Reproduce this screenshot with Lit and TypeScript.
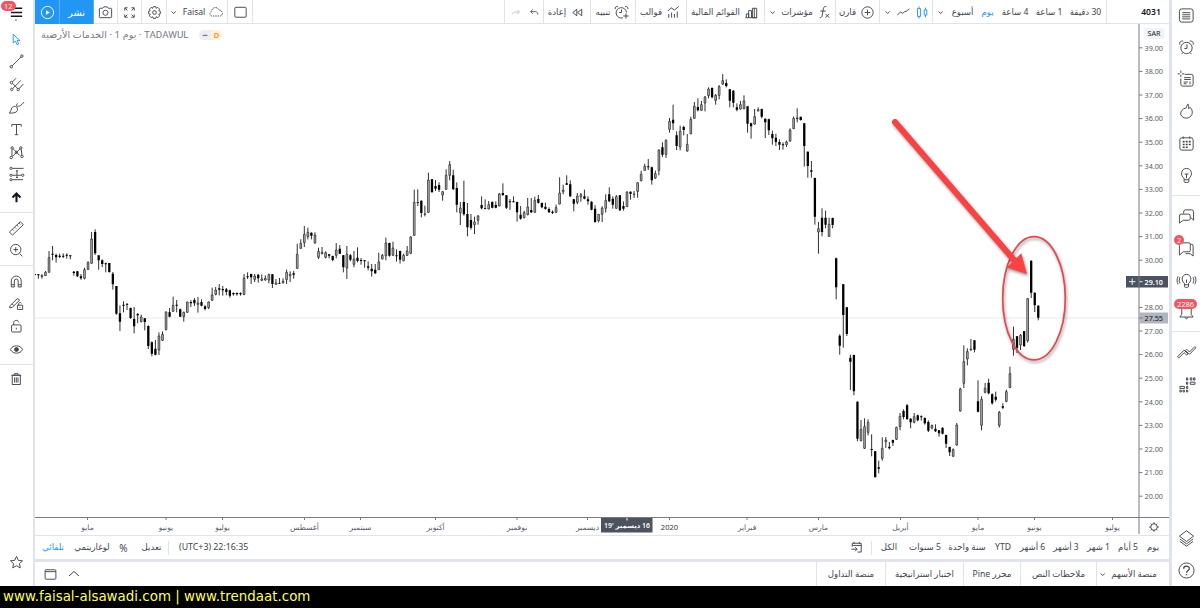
import { html, css, svg, LitElement, TemplateResult } from 'lit';
import { customElement, property } from 'lit/decorators.js';
import { classMap } from 'lit/directives/class-map.js';
import { styleMap } from 'lit/directives/style-map.js';

type Cell_t = {
  width: number,
  text?: string,
  icon?: string,
  kind?: string,
  size?: number
}

const icons: Record<string, TemplateResult> = {
  menu: svg`<path d="M3 4.5h12M3 9h12M3 13h12" stroke-width="1.5"/>`,
  cursor: svg`<path d="M5.5 3.5v9.2l2.4-2 1.7 3.8 1.7-.8-1.7-3.6h3z"/>`,
  line: svg`<path d="M4.2 13.8l9.6-9.6"/><circle cx="3.4" cy="14.6" r="1.3"/><circle cx="14.7" cy="3.3" r="1.3"/>`,
  fork: svg`<path d="M4.7 6.2l3.8-3.8M4.500 7.500l6 6M5 13.300l8.500-8.500M11.700 13.500l4.500-5"/><circle cx="3.600" cy="7" r="1.300"/><circle cx="4" cy="14.200" r="1.300"/><circle cx="10.800" cy="14.300" r="1.300"/>`,
  brush: svg`<path d="M1.500 15c1.300-1.500 1.500-3.500 2.500-5.500 1.500-2.300 4.500-2.200 5.600-.3 1.200 2.200 0 4.600-2.200 5.200-1.900.5-3.900.5-5.900.6zM10 8.500c-1.200-1.500-1-3 0-3.800M10.800 7.800c1.500 0 4-1.800 6.200-4.600"/>`,
  text: svg`<path d="M4 6V3.700h10V6M9 3.700v10.800M7.200 14.500h3.600"/>`,
  pattern: svg`<path d="M4.200 13V5.500M5.500 5.200l7 7M4.600 13.300l8.500-8.500M14 5.500l.8 6.800"/><circle cx="4.400" cy="4.200" r="1.300"/><circle cx="13.600" cy="4.200" r="1.300"/><circle cx="8.800" cy="8.800" r="1.200"/><circle cx="3.400" cy="14.300" r="1.300"/><circle cx="14.800" cy="13.200" r="1.300"/>`,
  projection: svg`<path d="M4.500 2.500h12M4.500 9.800h10M4.500 14.500h11.500M9.500 4.500v8M8.500 5.200h2M8.500 12.200h2"/><circle cx="3.200" cy="2.500" r="1.200"/><circle cx="3.200" cy="9.800" r="1.200"/><circle cx="15.600" cy="9.800" r="1.200"/><circle cx="3.200" cy="14.500" r="1.200"/>`,
  up: svg`<path d="M9 14V5M4.800 9L9 4.800 13.200 9" stroke-width="2.200"/>`,
  ruler: svg`<path d="M1.500 12.800L13 1.800l3.200 3.200L4.700 16zM5 10l1.300 1.300M7.300 7.800l1.300 1.300M9.600 5.500l1.300 1.300M11.800 3.400l1.300 1.300"/>`,
  zoom: svg`<circle cx="8.200" cy="8" r="5.500"/><path d="M12.200 12.200l3 3M5.700 8h5M8.200 5.500v5"/>`,
  magnet: svg`<path d="M3.500 14.800V8.500a5 5 0 0 1 10.500 0v6.300h-3.200V8.500a2 2 0 0 0-4.100 0v6.300zM3.500 12.400h3.200M10.800 12.400H14"/>`,
  drawLock: svg`<path d="M2 11.500l7.500-7.300a1.500 1.500 0 0 1 2 2.200L4.500 13l-2.700.6zM4.500 9.500l1.500 1.700M10 10.800h5.500v4.500H10zM11.300 10.800V9.300c0-1.800 2.600-1.800 2.800-.4"/><path d="M12.700 12.600v1"/>`,
  lock: svg`<rect x="3.800" y="7.300" width="10" height="7.500" rx="1"/><path d="M6 7.300V5c0-3.200 5-3.400 5.500-.3M8.800 10.300v1.800"/>`,
  eye: svg`<path d="M2.500 9c2.700-5.200 10.300-5.200 13 0-2.700 5.200-10.300 5.200-13 0z"/><circle cx="9" cy="9" r="2" fill="currentColor"/>`,
  trash: svg`<path d="M4.500 4.500h8.600v9.800H4.500zM3.500 4.500h10.500M7 4.300V2.800h3.600v1.500M7 6.800v5.500M8.800 6.800v5.500M10.600 6.800v5.500"/>`,
  star: svg`<path d="M9 2.500l1.900 4.200 4.500.5-3.300 3 .9 4.500L9 12.400l-4 2.300.9-4.500-3.300-3 4.500-.5z"/>`,
  play: svg`<circle cx="9" cy="9" r="6.500"/><path d="M7.500 6.500v5L11.500 9z" fill="currentColor" stroke="none"/>`,
  camera: svg`<path d="M2.500 5.500q0-1 1-1H6l1.200-1.500h3.600L12 4.500h2.500q1 0 1 1v8q0 1-1 1h-11q-1 0-1-1z"/><circle cx="9" cy="9.300" r="2.700"/>`,
  expand: svg`<path d="M4 7V4h3M4.300 4.300l2.500 2.500M11 4h3v3M13.700 4.300l-2.500 2.500M4 11v3h3M4.300 13.700l2.500-2.500M11 14h3v-3M13.700 13.700l-2.500-2.500"/>`,
  gear: svg`<path d="M7.700 2.800h2.600l.5 1.700 1.700-.9 1.900 1.900-.9 1.700 1.700.5v2.600l-1.700.5.9 1.700-1.900 1.900-1.700-.9-.5 1.700H7.700l-.5-1.700-1.700.9-1.900-1.900.9-1.700-1.700-.5V7.700l1.700-.5-.9-1.700 1.900-1.900 1.700.9z"/><circle cx="9" cy="9" r="2"/>`,
  cloud: svg`<path d="M4.500 13.500a2.800 2.800 0 0 1-.3-5.500c.3-5 7-5.300 8-1.200 3 0 4.300 2 3.900 4.200-.3 1.600-1.500 2.500-3 2.500z" stroke-dasharray="1.700 1"/>`,
  frame: svg`<rect x="3" y="3.500" width="12" height="10.500" rx="1"/>`,
  chevron: svg`<path d="M7 8l2.200 2L11.400 8"/>`,
  redo: svg`<path d="M13.500 8.500H8c-2 0-3 1.300-3 3M11 5.800l2.700 2.700-2.700 2.600"/>`,
  undo: svg`<path d="M4.500 8H10c2 0 3 1.300 3 3.500M7 5.200L4.300 8 7 10.600"/>`,
  rewind: svg`<path d="M8.300 5.500v7L4 9zM13.500 5.500v7L9.200 9z"/>`,
  alertAdd: svg`<path d="M10.500 14.600a5.500 5.500 0 1 1 3.800-5.600M9 5.800V9H6.500M2.300 5.500c-.5-2 1.200-3.300 3-2.700M12.800 2.800c2-.6 3.500.8 3 2.700M13.700 10v5.500M11 12.700h5.500"/>`,
  templates: svg`<path d="M3 7.500L6.500 4 10 6.500l4.500-4M4 14.500v-4M7 14.500V9M10 14.500v-4M13 14.500V8"/>`,
  bars: svg`<path d="M3.500 14.500v-4H6v4M6 14.500V7h3v7.500M10 14.500V4.500h4.500v10zM2.500 14.500h12.500M12 4.500v10"/>`,
  fx: svg`<path d="M4 14.300c1.500.3 2.200-.5 2.500-2l1.300-7.300c.4-1.900 1.400-2.700 3.200-2.200M4.500 7.500h5.800M10 10.500l4 4M14 10.500l-4 4"/>`,
  plus: svg`<circle cx="9" cy="9" r="6"/><path d="M6 9h6M9 6v6"/>`,
  wave: svg`<path d="M2.500 11.500l3.500-3 2.200 1.500 2-2h1.500l3.500-3M2.500 13.200h.1"/>`,
  candles: svg`<path d="M3.800 4.800h3v8.400h-3zM5.300 2.500v2.300M5.300 13.200v2.300M10.800 6.300h2.800v5.400h-2.800zM12.200 3.800v2.500M12.200 11.700v2.500"/>`,
  calendarGo: svg`<path d="M4.500 8V4.500h9.500v9.300H10M4.500 6.800H14M6.500 3v2M12 3v2M3.500 10.800h6M7.500 8.700l2.200 2.100-2.200 2.200"/>`,
  panel: svg`<rect x="3.300" y="4" width="11.400" height="10" rx="1"/><path d="M3.300 6h11.400"/>`,
  collapse: svg`<path d="M4 11l5-4.500 5 4.500"/>`,
  list: svg`<rect x="1.500" y="2" width="14.500" height="14" rx="2.500"/><path d="M4.500 6h8.500M4.500 8.200h8.500M4.500 10.400h8.500M4.500 12.600h8.500"/>`,
  alarm: svg`<circle cx="9" cy="9.500" r="6"/><path d="M9.500 5.800V10H6.700M2 6c-.9-2.700 1.300-4.600 3.600-3.600M12.400 2.400c2.300-1 4.500.9 3.600 3.600M5 14.500l-1 1.300M13 14.500l1 1.300"/>`,
  news: svg`<path d="M7 3.500h7q2 0 2 2V14q0 2-2 2H5q-2 0-2-2V8M6.500 7h7M6.500 9h7M6 11.700h4.500M12 11.700h1.500M6 13.500h3M12 13.500h1.500M3-.5v2.500M3 4v2.500M-.5 3H2M4 3h2.500"/>`,
  flame: svg`<path d="M5.800 6.300L9 5c.5-1.500.3-2.500 1.500-4 .6 1.500 1 3.200.7 5l1.800-1.300c4.500 4.800 1.300 11.300-4 11.300C3.200 16 .2 10.300 5.800 6.300z"/>`,
  calendar: svg`<rect x="2" y="3" width="14" height="13" rx="2"/><path d="M5.500 1.500V4M12.500 1.500V4"/><path d="M5 7h2M8.200 7h2M11.400 7h2M5 10h2M8.200 10h2M11.400 10h2M5 13h2M8.200 13h2" stroke-width="1.700"/>`,
  bulb: svg`<path d="M6.500 12C2.200 9.500 3 1.500 9 1.500S15.800 9.500 11.500 12v3.300q0 1-1 1h-3q-1 0-1-1zM6.500 13.500h5M9 12V7.500M7 7.500h4"/>`,
  chats: svg`<path d="M6 6V4q0-2 2-2h6.500q2 0 2 2v9L13.500 10M3.500 6.500h7.500q2 0 2 2V11q0 2-2 2H5.500L1.500 16V8.500q0-2 2-2z"/>`,
  chat: svg`<path d="M13 4.500h1.500q1.500 0 1.500 2V17l-3-2.500H8M3 3h8.500q1.500 0 1.500 1.500V11q0 1.500-1.500 1.500H5.500L1.500 16V5.500"/>`,
  stream: svg`<path d="M6.800 12C3 9.500 3.800 2.500 9 2.500s6 7 2.200 9.500v3.200q0 1-1 1H7.800q-1 0-1-1zM6.800 13.500h4.400M9 11.500V8M2.200 5.500c-1.200 2-1.200 4.500 0 6.500M.2 4.500c-1.600 2.700-1.600 5.800 0 8.500M15.800 5.500c1.200 2 1.200 4.500 0 6.500M17.800 4.500c1.600 2.700 1.600 5.800 0 8.500"/>`,
  bell: svg`<path d="M4 3v8l-2 2.800h14L14 11V3M7.500 14c.3 2.200 2.700 2.200 3 0"/>`,
  zigzag: svg`<path d="M-.5 13.500L6.500 6.500l4 4-1.300 1.300-2.700-2.700L.8 14.800zM7.800 6.800l1.300-1.300 3 3L17.800 2.800 19 4l-6.900 6.900z"/>`,
  dom: svg`<path d="M13 2h1.700v2.300H13zM16.500 2h1.500v2.300h-1.500zM9 2h1.300v2.300H9zM9 6.500h1.300v2.300H9zM13 6.500h5v2.300h-5zM2 11h4.800v2.200H2zM9 11h1.300v2.200H9zM2 15h1.500v1.900H2zM5.300 15h1.500v1.900H5.300zM9 15h1.300v1.900H9z"/>`,
  layers: svg`<path d="M9 .8l7.500 5.700L9 12.200 1.500 6.500zM2 9.500l7 5.200 7-5.200M2 12l7 5.200L16 12"/>`,
  help: svg`<circle cx="9" cy="9" r="8"/><path d="M6 7.200c0-3.700 6-3.700 6-.2 0 2-2.800 2-3 4.400M9 12.700v1.300" stroke-width="1.400"/>`,
};

const topCells: Cell_t[] = [
  { width: 25, icon: 'play', kind: 'blue' },
  { width: 34, text: 'نشر', kind: 'blue big' },
  { width: 24, icon: 'camera' },
  { width: 24, icon: 'expand' },
  { width: 25, icon: 'gear' },
];

const intervals: Cell_t[] = [
  { width: 15, icon: 'chevron' },
  { width: 29, text: 'أسبوع' },
  { width: 21, text: 'يوم', kind: 'active' },
  { width: 34, text: '4 ساعة' },
  { width: 34, text: '1 ساعة' },
  { width: 39, text: '30 دقيقة' },
];

const ranges: Cell_t[] = [
  { width: 31, icon: 'calendarGo', kind: 'ruled' },
  { width: 34, text: 'الكل' },
  { width: 38, text: '5 سنوات' },
  { width: 46, text: 'سنة واحدة' },
  { width: 26, text: 'YTD' },
  { width: 33, text: '6 أشهر' },
  { width: 34, text: '3 أشهر' },
  { width: 31, text: '1 شهر' },
  { width: 28, text: '5 أيام' },
  { width: 22, text: 'يوم' },
];

const months: [number, string][] = [
  [87.5, 'مايو'], [166, 'يونيو'], [222.5, 'يوليو'], [304.5, 'أغسطس'],
  [360.5, 'سبتمبر'], [435.5, 'أكتوبر'], [517, 'نوفمبر'], [587.5, 'ديسمبر'],
  [669.5, '2020'], [747, 'فبراير'], [818.5, 'مارس'], [900.5, 'أبريل'],
  [978, 'مايو'], [1034.5, 'يونيو'], [1112.5, 'يوليو'],
];

// Daily bars: high,open,close,low. Three units per pixel, down from the top of each run.
const runs = [
  {
    top: 140,
    bars: `402,402,405,405 402,403,406,416 403,410,406,416 393,407,397,407 333,397,353,397 318,341,344,361
      341,345,352,368 341,347,351,354 340,347,350,354 340,344,347,356 346,346,348,358 393,395,399,407
      393,394,409,411 402,409,415,419 383,415,389,418 364,388,367,390 276,370,297,370 268,276,340,345
      346,346,361,389 358,361,372,381 368,370,372,397 369,369,396,398 396,401,433,449 438,438,521,524
      496,520,545,573 484,494,497,517 490,491,494,510 503,504,534,537 501,537,559,580 519,522,526,550
      524,545,531,547 534,535,546,571 556,558,618,627 604,607,641,649 600,626,644,646 577,630,588,645
      574,601,583,603 514,569,516,571 504,517,530,532 470,514,496,515 480,494,497,517 506,508,530,531
      515,530,517,545 485,517,486,518 480,486,490,501 474,480,490,498 471,493,489,518 478,486,497,499
      496,499,507,511 484,503,486,507 443,481,465,482 441,463,450,466 432,445,449,466 438,447,451,467
      444,448,456,466 449,451,467,473 457,459,463,467 457,459,463,467 457,459,463,467 402,464,414,465
      397,409,412,417 401,402,412,432 402,418,408,426 402,404,415,428 403,421,417,423 406,420,415,422
      401,420,404,430 402,403,432,444 417,433,429,433 414,429,431,432 415,429,424,430 389,419,397,432
      394,407,403,426 393,400,404,416 311,385,343,386 298,325,310,326 258,308,283,321 263,290,277,298
      277,278,287,298 277,309,285,311 323,352,334,357 321,341,337,343 334,352,338,355 342,343,347,355
      347,348,360,364 309,346,330,355 315,326,341,342 345,346,382,397 318,384,343,417 342,346,359,364
      333,373,357,382 322,353,363,367 354,360,363,374 360,361,363,383 364,379,383,391 372,386,394,410
      372,389,400,402 338,389,366,390 342,357,346,358`,
  },
  {
    top: 60,
    bars: `533,587,549,601 548,549,587,590 545,586,564,587 568,586,588,605 572,573,599,611 581,602,586,604
      558,586,573,588 529,580,531,582 389,526,427,527 388,426,428,438 421,422,459,472 437,461,463,469
      338,457,360,459 357,358,396,399 360,378,386,393 367,375,389,396 394,405,395,422 328,388,346,389
      303,346,314,361 329,346,388,390 367,384,434,457 426,458,444,495 362,426,463,467 429,462,502,529
      462,480,503,509 470,494,486,522 465,481,468,494 409,435,445,448 418,444,446,448 423,447,434,448
      424,426,443,445 424,435,443,445 399,438,402,439 370,399,405,408 405,406,443,447 417,424,427,450
      409,424,426,427 425,426,457,485 438,464,476,479 452,473,458,475 414,464,441,466 414,450,457,459
      410,457,421,458 405,417,428,431 428,429,442,445 428,440,447,449 442,447,457,459 451,455,459,462
      434,457,443,459 352,432,399,433 374,395,390,403 346,370,374,375 361,373,409,411 417,418,431,454
      399,427,408,433 399,410,404,425 389,409,416,418 409,418,424,434 424,425,449,451 436,446,486,488
      462,482,463,487 439,463,444,486 403,445,421,458 382,403,424,426 409,416,434,446 405,445,410,446
      405,406,451,453 424,438,446,452 394,440,396,441 394,395,402,419 393,401,403,414 367,394,368,413
      332,362,343,364 311,331,319,332 297,319,321,330 320,322,361,374 332,354,341,357 268,331,270,346
      247,262,284,291 238,283,241,294 174,208,184,218 134,179,190,210 214,226,258,270 197,261,214,271
      197,201,210,226 222,273,253,275 170,221,178,223 126,175,139,176 115,141,151,154 123,151,134,152
      108,129,111,154 82,107,87,115 82,84,112,115 102,121,106,134 75,106,80,118 42,72,62,75
      58,69,78,82 87,88,122,142 90,92,128,142 130,142,149,154 123,147,134,149 106,146,123,148
      138,139,191,218 188,190,199,236 147,192,170,194 142,153,149,154 146,147,170,175 175,176,187,234
      176,178,211,225 212,222,235,254 221,233,246,258 238,246,254,270 247,253,255,269 242,254,246,261
      205,243,210,245 170,206,175,207 145,173,176,187 170,170,180,182 189,190,258,320 274,275,318,353
      303,331,335,353 353,354,470,494 486,516,506,581 445,473,516,529 452,473,494,505 473,529,493,530
      473,474,495,505 593,595,682,718 823,827,857,884 672,673,765,863 741,742,822,828 884,893,905,990
      884,885,994,1006 1024,1025,1136,1144 1080,1142,1108,1144 1075,1165,1100,1167 1078,1117,1087,1126
      1123,1167,1170,1189 1173,1174,1252,1252`,
  },
  {
    top: 230,
    bars: `692,712,716,730 622,685,655,692 621,635,630,654 636,650,655,658 629,630,638,648 590,628,592,630
      549,590,559,601 538,543,561,568 522,526,567,570 564,566,577,595 549,577,560,580 554,556,571,574
      556,559,561,572 562,564,580,584 571,576,602,606 584,594,586,598 583,596,604,606 600,601,610,620
      592,593,611,613 614,615,641,654 650,651,667,678 655,679,659,680 579,645,585,647 473,543,477,545
      346,460,395,474 355,387,365,406 327,360,357,362 330,331,359,367 451,514,545,547 499,586,508,601
      459,487,475,490 446,458,490,493 490,493,520,524 485,500,509,515 543,586,547,593 520,529,533,537
      479,514,485,517 410,473,431,474 290,358,328,377 318,319,353,369 312,345,316,360 303,304,348,351
      204,332,206,338 90,93,188,204 187,188,226,246 225,227,263,271`,
  },
];

const FIRST_X = 34.85;
const STEP = 3.5457;

@customElement('tv-icon')
export class TvIcon extends LitElement {
  static styles = css`
  :host {
    display: inline-flex;
    flex: none;
 }
  svg {
    display: block;
    overflow: visible;
    fill: none;
    stroke: currentColor;
    stroke-width: 1;
 }
  `;

  @property() name = '';
  @property({ type: Number }) size = 18;

  render() {
    return html`<svg width=${this.size} height=${this.size} viewBox="0 0 18 18">${icons[this.name]}</svg>`;
  }
}

@customElement('price-chart')
export class PriceChart extends LitElement {
  static styles = css`
  :host {
    display: block;
 }
  svg {
    display: block;
 }
  text {
    font-family: "Noto Sans", "DejaVu Sans", sans-serif;
    font-size: 7.9px;
    fill: #5a5d67;
 }
  .month {
    font-size: 7.6px;
    text-anchor: middle;
    direction: rtl;
 }
  .year {
    fill: #33363f;
 }
  .on-dark {
    fill: #fff;
    font-weight: 600;
 }
  .cursor-date {
    font-size: 6.9px;
 }
  .dark {
    fill: #131722;
 }
  .axis {
    stroke: #787b86;
    fill: none;
 }
  .wick {
    stroke: #1a1a1a;
    stroke-width: .9;
    fill: none;
 }
  .up {
    stroke: #2b2b2b;
    stroke-width: .75;
    fill: #b8b8b8;
 }
  .down {
    fill: #000;
 }
  .mark {
    filter: drop-shadow(1px 2px 1.500px rgba(0, 0, 0, .4));
 }
  `;

  renderBars() {
    let wick = '';
    let up = '';
    let down = '';
    let x = FIRST_X;
    for (const run of runs) {
      for (const bar of run.bars.split(/\s+/)) {
        const [high, open, close, low] = bar.split(',').map((v) => run.top + Number(v) / 3);
        wick += `M${x.toFixed(2)} ${high.toFixed(2)}V${low.toFixed(2)}`;
        const h = Math.max(Math.abs(close - open), .8);
        if (close < open) {
          up += `M${(x - .85).toFixed(2)} ${close.toFixed(2)}h1.700v${h.toFixed(2)}h-1.700z`;
        } else {
          down += `M${(x - 1.15).toFixed(2)} ${open.toFixed(2)}h2.300v${h.toFixed(2)}h-2.300z`;
        }
        x += STEP;
      }
    }
    return svg`<path class="wick" d=${wick}/><path class="up" d=${up}/><path class="down" d=${down}/>`;
  }

  renderPrices() {
    const prices = [];
    for (let p = 39; p >= 20; p--) {
      if (p === 29) continue;
      const y = 47.8 + (39 - p) * 23.6;
      prices.push(svg`
        <path class="axis" d="M1139 ${y}h3.500"/>
        <text x="1144.500" y=${y + 2.8} textLength="18.500" lengthAdjust="spacingAndGlyphs">${p.toFixed(2)}</text>`);
    }
    return prices;
  }

  render() {
    return html`
<svg width="1134" height="511" viewBox="35 24 1134 511">
  <path d="M35 318H1139" stroke="#e9e9eb"/>
  ${this.renderBars()}
  <path class="axis" d="M1139 24V534M35 517.500H1169"/>
  ${this.renderPrices()}
  ${months.map(([x, name]) => svg`
    <path class="axis" d="M${x} 517v3"/>
    <text class=${name === '2020' ? 'month year' : 'month'} x=${x} y="529.500">${name}</text>`)}
  <rect x="1143.500" y="28" width="21" height="11" rx="2" fill="#f0f3fa"/>
  <text class="dark" x="1147.500" y="36.300" textLength="13" lengthAdjust="spacingAndGlyphs">SAR</text>
  <rect x="1126" y="276" width="42" height="11.500" fill="#4c525e"/>
  <path d="M1129 281.700h6.500M1132.200 278.500v6.500M1139 281.700h3.500" stroke="#fff" stroke-width=".9"/>
  <path d="M1139 276v11.500" stroke="#787b86"/>
  <text class="on-dark" x="1144.500" y="284.500" textLength="18.500" lengthAdjust="spacingAndGlyphs">29.10</text>
  <rect x="1139.500" y="312.500" width="28.500" height="11" fill="#b2b5be"/>
  <path class="axis" d="M1139 318h3.500"/>
  <text class="dark" x="1144.500" y="320.800" textLength="18.500" lengthAdjust="spacingAndGlyphs">27.55</text>
  <rect x="601" y="518" width="51.500" height="14.500" fill="#4c525e"/>
  <path d="M627 518v2.500" stroke="#fff"/>
  <text class="month on-dark cursor-date" x="627" y="528">16 ديسمبر '19</text>
  <g transform="translate(1154 527)" fill="none" stroke="#42454e">
    <circle r="3.300"/>
    <path d="M0-3.300V-4.800M0 3.300v1.500M-3.300 0h-1.500M3.300 0h1.500M2.300-2.300l1-1M-2.300-2.300l-1-1M2.300 2.300l1 1M-2.300 2.300l-1 1"/>
  </g>
  <g class="mark">
    <ellipse cx="1034" cy="298.300" rx="31.300" ry="61.600" fill="none" stroke="#e5474d" stroke-width="1.700"/>
  </g>
  <g class="mark">
    <path d="M895 122L1014 260" stroke="#fb4242" stroke-width="6" stroke-linecap="round"/>
    <path d="M1027 274L1021.300 253.300 1006.700 267.600z" fill="#fb4242"/>
  </g>
</svg>`;
  }
}

@customElement('app-root')
export class AppRoot extends LitElement {
  static styles = css`
  :host {
    display: block;
    width: 1200px;
    height: 608px;
    overflow: hidden;
    background: #fff;
    color: #42454e;
    font: 8.600px/1 "Noto Sans", "DejaVu Sans", sans-serif;
 }
  * {
    box-sizing: border-box;
 }
  .workspace {
    display: flex;
    height: 586px;
 }
  .tools {
    width: 35px;
    border-right: 2px solid #e0e3eb;
    display: flex;
    flex-direction: column;
 }
  .group {
    display: flex;
    flex-direction: column;
    border-bottom: 1px solid #e0e3eb;
 }
  .group.last {
    border-bottom: none;
 }
  .grow {
    flex: 1;
 }
  .tool {
    display: flex;
    align-items: center;
    justify-content: center;
    position: relative;
    height: 22.600px;
 }
  .tools .tool {
    width: 32px;
 }
  .tool.menu {
    height: 25px;
    color: #131722;
 }
  .tool.blue {
    color: #2196f3;
 }
  .tool.solid {
    color: #131722;
 }
  .dot {
    position: absolute;
    left: 15px;
    top: 19px;
    width: 2px;
    height: 2px;
    border-radius: 50%;
    background: #9598a1;
 }
  .badge {
    position: absolute;
    left: 1px;
    top: 1px;
    padding: 0 3px;
    height: 10px;
    border-radius: 5px;
    background: #f7525f;
    color: #fff;
    font-size: 7.500px;
    line-height: 10px;
 }
  .pad-a {
    padding: 3px 0 3.500px;
 }
  .pad-b {
    padding: 3.500px 0;
 }
  .pad-star {
    padding-bottom: 12px;
 }
  .widgets {
    width: 31px;
    border-left: 3px solid #e0e3eb;
    display: flex;
    flex-direction: column;
 }
  .widgets .tool {
    height: 32px;
 }
  .widgets .badge {
    left: 2px;
    top: 3px;
 }
  .pad-w {
    margin-top: -1px;
    padding-bottom: 4px;
 }
  .pad-x {
    padding: 4px 0 3px;
 }
  .main {
    width: 1134px;
    display: flex;
    flex-direction: column;
 }
  .bar {
    display: flex;
    flex: none;
    height: 24px;
    overflow: hidden;
 }
  .top {
    box-shadow: inset 0 -1px #e0e3eb;
 }
  .cell {
    display: flex;
    align-items: center;
    justify-content: center;
    flex: none;
    gap: 3px;
    white-space: nowrap;
 }
  .cell span {
    direction: rtl;
 }
  .edge {
    border-right: 1px solid #e0e3eb;
 }
  .blue-cell {
    background: #2196f3;
    color: #fff;
    border-right: 1px solid #57b0f6;
 }
  .big {
    font-size: 10px;
 }
  .active {
    color: #2196f3;
 }
  .strong {
    color: #131722;
    font-weight: 600;
 }
  .faded {
    opacity: .35;
 }
  .ruled {
    background: linear-gradient(#e0e3eb, #e0e3eb) right / 1px 14px no-repeat;
 }
  .stage {
    display: grid;
    height: 511px;
 }
  .stage > * {
    grid-area: 1 / 1;
 }
  .legend {
    display: flex;
    align-items: center;
    align-self: start;
    gap: 2.500px;
    height: 22px;
    padding-left: 6px;
    font-size: 9.700px;
    color: #787b86;
 }
  .legend .name {
    direction: rtl;
 }
  .legend .market {
    font-family: Roboto, sans-serif;
    font-size: 9.800px;
 }
  .pill {
    display: flex;
    margin-left: 8px;
    height: 10px;
    border-radius: 5px;
    overflow: hidden;
    font-size: 7.500px;
    line-height: 10px;
    text-align: center;
 }
  .pill .dash {
    width: 12px;
    background: #eceef3;
    font-weight: 700;
 }
  .pill .delay {
    width: 11px;
    background: #fff0dc;
    color: #f7931a;
    font-weight: 600;
 }
  .range {
    border-top: 1px solid #e0e3eb;
 }
  .clock {
    padding-left: 10px;
    font-size: 8.800px;
 }
  .gutter {
    flex: none;
    height: 3px;
    background: #e0e3eb;
 }
  .footer {
    height: 22px;
    background: #000;
    color: #ffff4d;
    font: 13.430px/22px "DejaVu Sans", sans-serif;
    padding-left: 3px;
    white-space: pre;
 }
  `;

  renderCell(cell: Cell_t, edge = false) {
    const kinds = (cell.kind ?? '').split(' ');
    return html`
<div
  class="cell ${classMap({
      edge,
      'blue-cell': kinds.includes('blue'),
      big: kinds.includes('big'),
      active: kinds.includes('active'),
      ruled: kinds.includes('ruled'),
      strong: kinds.includes('strong'),
      faded: kinds.includes('faded'),
    })}"
  style=${styleMap({ width: `${cell.width}px` })}>
  ${cell.text ? html`<span>${cell.text}</span>` : ''}
  ${cell.icon ? html`<tv-icon name=${cell.icon} size=${cell.size ?? 17}></tv-icon>` : ''}
</div>`;
  }

  renderTool(name: string, kind = '', badge = '') {
    return html`
<div class="tool ${kind}">
  <tv-icon name=${name} size="17"></tv-icon>
  ${badge ? html`<div class="badge">${badge}</div>` : ''}
  ${kind === 'menu' ? html`<div class="dot"></div>` : ''}
</div>`;
  }

  renderTop() {
    return html`
<div class="bar top">
  ${topCells.map((cell) => this.renderCell(cell, true))}
  ${this.renderCell({ width: 13, icon: 'chevron' })}
  ${this.renderCell({ width: 48, text: 'Faisal', icon: 'cloud', size: 16 }, true)}
  ${this.renderCell({ width: 25, icon: 'frame' }, true)}
  <div class="grow edge"></div>
  ${this.renderCell({ width: 20, icon: 'redo', kind: 'faded', size: 15 })}
  ${this.renderCell({ width: 19, icon: 'undo', size: 15 }, true)}
  ${this.renderCell({ width: 47, text: 'إعادة', icon: 'rewind' }, true)}
  ${this.renderCell({ width: 45, text: 'تنبيه', icon: 'alertAdd' }, true)}
  ${this.renderCell({ width: 51, text: 'قوالب', icon: 'templates' }, true)}
  ${this.renderCell({ width: 78, text: 'القوائم المالية', icon: 'bars' }, true)}
  ${this.renderCell({ width: 14, icon: 'chevron' })}
  ${this.renderCell({ width: 57, text: 'مؤشرات', icon: 'fx' }, true)}
  ${this.renderCell({ width: 44, text: 'قارن', icon: 'plus' }, true)}
  ${this.renderCell({ width: 14, icon: 'chevron' })}
  ${this.renderCell({ width: 19, icon: 'wave' })}
  ${this.renderCell({ width: 20, icon: 'candles', kind: 'active' }, true)}
  ${intervals.map((cell) => this.renderCell(cell))}
  ${this.renderCell({ width: 2 }, true)}
  ${this.renderCell({ width: 26 })}
  ${this.renderCell({ width: 36, text: '4031', kind: 'strong' })}
</div>`;
  }

  render() {
    return html`
<div class="workspace">
  <div class="tools">
    ${this.renderTool('menu', 'menu', '12')}
    <div class="group pad-a">
      ${this.renderTool('cursor', 'blue')}
      ${['line', 'fork', 'brush', 'text', 'pattern', 'projection'].map((name) => this.renderTool(name))}
      ${this.renderTool('up', 'solid')}
    </div>
    <div class="group pad-b">${['ruler', 'zoom'].map((name) => this.renderTool(name))}</div>
    <div class="group pad-b">${['magnet', 'drawLock', 'lock', 'eye'].map((name) => this.renderTool(name))}</div>
    <div class="group last pad-b grow">${this.renderTool('trash')}</div>
    <div class="group last pad-star">${this.renderTool('star')}</div>
  </div>

  <div class="main">
    ${this.renderTop()}
    <div class="stage">
      <price-chart></price-chart>
      <div class="legend">
        <span class="name">الخدمات الأرضية</span><span>·</span><span>1</span><span class="name">يوم</span><span>·</span><span class="market">TADAWUL</span>
        <div class="pill"><div class="dash">━</div><div class="delay">D</div></div>
      </div>
    </div>
    <div class="bar range">
      ${this.renderCell({ width: 36, text: 'تلقائي', kind: 'active' })}
      ${this.renderCell({ width: 42, text: 'لوغاريتمي' })}
      ${this.renderCell({ width: 21, text: '%', kind: 'big' })}
      ${this.renderCell({ width: 35, text: 'تعديل', kind: 'ruled' })}
      <div class="cell clock">(UTC+3) 22:16:35</div>
      <div class="grow"></div>
      ${ranges.map((cell) => this.renderCell(cell))}
      ${this.renderCell({ width: 5 })}
    </div>
    <div class="gutter"></div>
    <div class="bar">
      ${this.renderCell({ width: 31, icon: 'panel' })}
      ${this.renderCell({ width: 16, icon: 'collapse', size: 18 })}
      <div class="grow edge"></div>
      ${this.renderCell({ width: 69, text: 'منصة التداول' }, true)}
      ${this.renderCell({ width: 78, text: 'اختبار استراتيجية' }, true)}
      ${this.renderCell({ width: 57, text: 'محرر Pine' }, true)}
      ${this.renderCell({ width: 76, text: 'ملاحظات النص' }, true)}
      ${this.renderCell({ width: 11, icon: 'chevron' })}
      ${this.renderCell({ width: 52, text: 'منصة الأسهم' })}
      ${this.renderCell({ width: 9 })}
    </div>
  </div>

  <div class="widgets">
    <div class="group pad-w">
      ${['list', 'alarm', 'news', 'flame', 'calendar', 'bulb'].map((name) => this.renderTool(name))}
    </div>
    <div class="group pad-x">
      ${this.renderTool('chats')}
      ${this.renderTool('chat', '', '2')}
      ${this.renderTool('stream')}
      ${this.renderTool('bell', '', '2286')}
    </div>
    <div class="group last pad-x grow">${['zigzag', 'dom'].map((name) => this.renderTool(name))}</div>
    <div class="group last">${['layers', 'help'].map((name) => this.renderTool(name))}</div>
  </div>
</div>
<div class="footer">www.faisal-alsawadi.com | www.trendaat.com</div>
    `;
  }
}
